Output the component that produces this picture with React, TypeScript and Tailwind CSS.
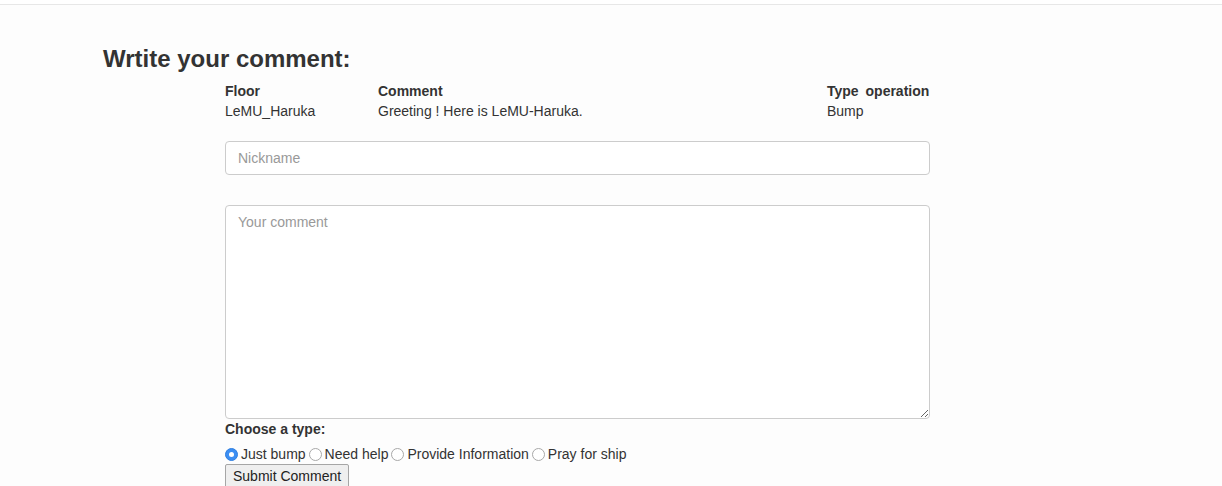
const Radio = ({ label, checked }: { label: string; checked?: boolean }) => (
  <label className="flex items-center">
    {checked ? (
      <span className="w-[13px] h-[13px] rounded-full bg-[#3b8ef3] border border-[#2f7fe0] flex items-center justify-center">
        <span className="w-[5px] h-[5px] rounded-full bg-white" />
      </span>
    ) : (
      <span className="w-[13px] h-[13px] rounded-full bg-white border border-[#a8a8a8]" />
    )}
    <span className="ml-[3px] mr-[3px]">{label}</span>
  </label>
);

const App = () => {
  return (
    <div
      className="min-h-[486px] bg-[#fdfdfd] text-[#333] text-[14px] leading-[20px]"
      style={{ fontFamily: '"Liberation Sans", Arial, sans-serif' }}
    >
      <div className="h-[5px] border-b border-[#e7e7e7] bg-white" />

      <div className="pl-[103px] pt-[40px]">
        <h3 className="text-[24px] leading-[28px] font-bold text-[#333]">
          Wrtite your comment:
        </h3>
      </div>

      <div className="pl-[225px] w-[930px]">
        {/* Table */}
        <div className="mt-[8px]">
          <div className="grid grid-cols-[153px_449px_1fr] font-bold">
            <div>Floor</div>
            <div>Comment</div>
            <div className="[word-spacing:3px]">Type operation</div>
          </div>
          <div className="grid grid-cols-[153px_449px_1fr]">
            <div>LeMU_Haruka</div>
            <div>Greeting ! Here is LeMU-Haruka.</div>
            <div>Bump</div>
          </div>
        </div>

        {/* Form */}
        <input
          type="text"
          placeholder="Nickname"
          className="mt-[20px] block w-full h-[34px] px-[12px] bg-white border border-[#ccc] rounded-[4px] text-[14px] placeholder:text-[#999] outline-none"
        />
        <textarea
          placeholder="Your comment"
          className="mt-[30px] block w-full h-[214px] px-[12px] py-[6px] bg-white border border-[#ccc] rounded-[4px] text-[14px] placeholder:text-[#999] outline-none"
        />

        <div className="font-bold">Choose a type:</div>
        <div className="flex items-center mt-[5px]">
          <Radio label="Just bump" checked />
          <Radio label="Need help" />
          <Radio label="Provide Information" />
          <Radio label="Pray for ship" />
        </div>
        <button
          type="button"
          className="block h-[24px] px-[7px] bg-[#efefef] border border-[#a6a6a6] text-[14px] leading-[20px] text-[#222] rounded-[2px]"
        >
          Submit Comment
        </button>
      </div>
    </div>
  );
};

export default App;
